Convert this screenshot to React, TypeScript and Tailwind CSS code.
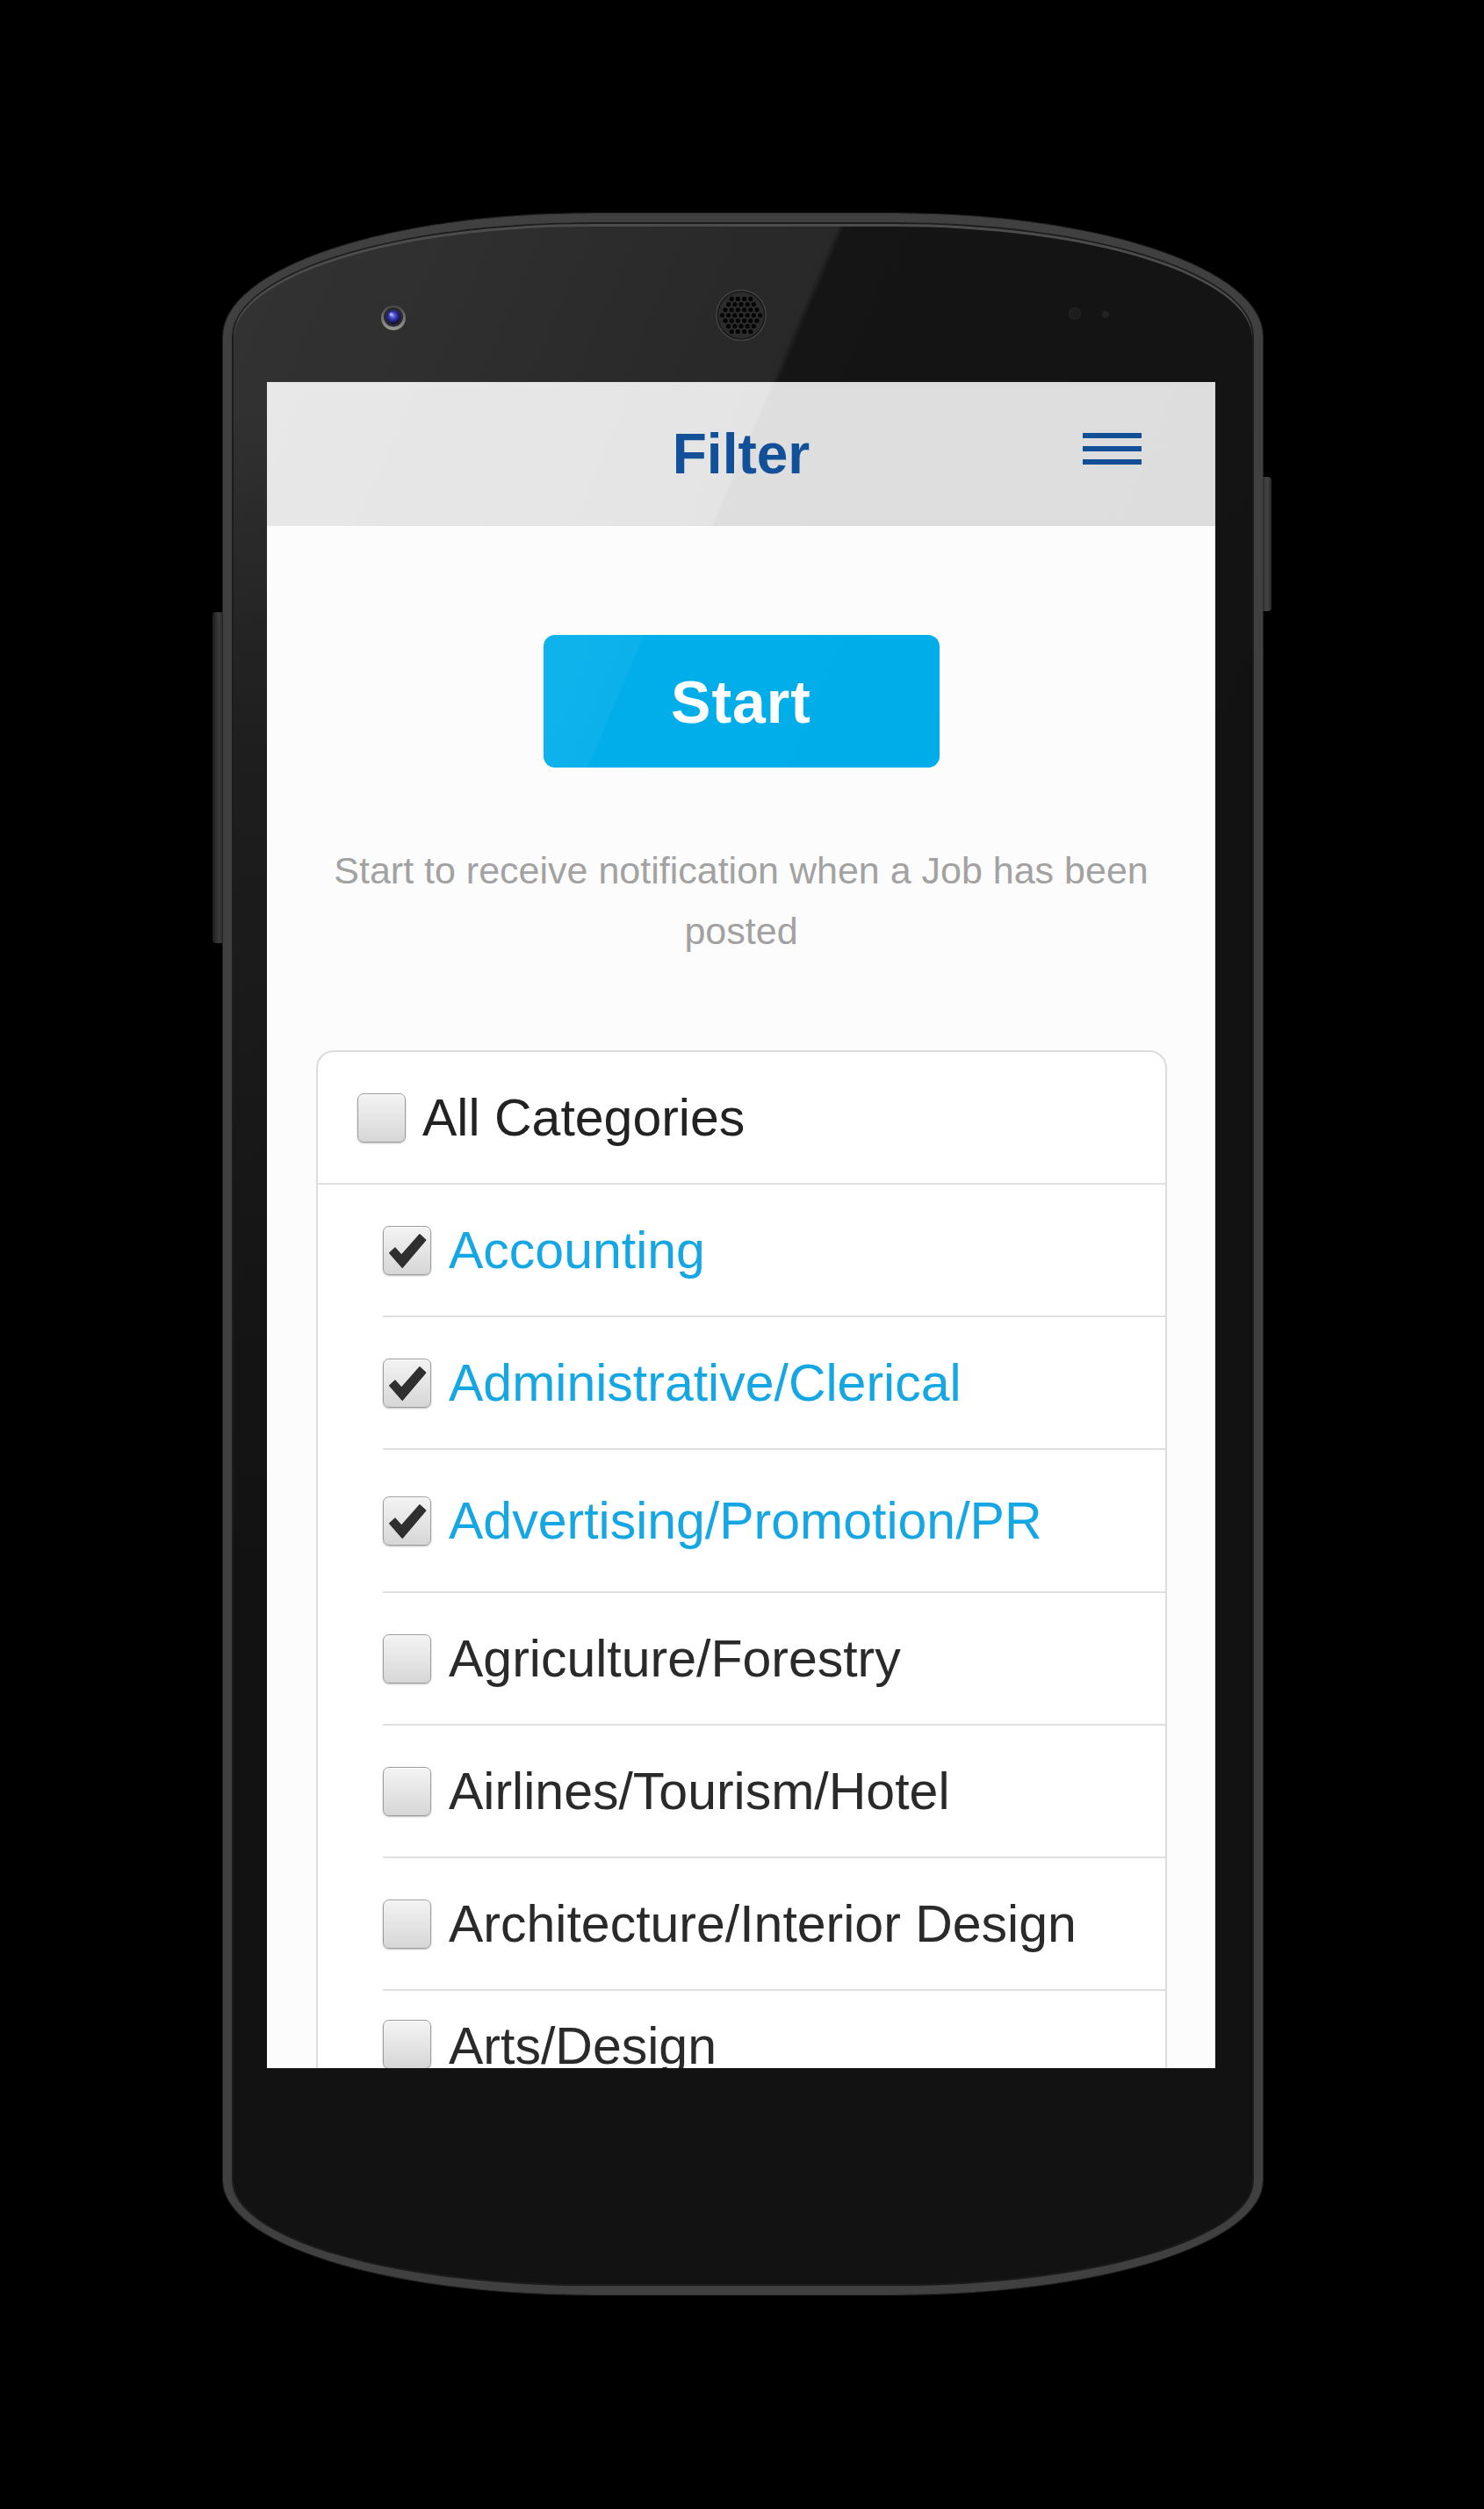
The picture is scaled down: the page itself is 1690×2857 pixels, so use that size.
import React from "react";

const FONT = "font-['Liberation_Sans',Arial,Helvetica,sans-serif]";

function Check({ checked }: { checked: boolean }) {
  return (
    <div className="w-[55px] h-[56px] shrink-0 rounded-[7px] border border-[#9c9c9c] bg-[linear-gradient(180deg,#f3f3f3_0%,#e4e4e4_55%,#d6d6d6_100%)] shadow-[0_1px_2px_rgba(0,0,0,0.25),inset_0_1px_0_#fff] flex items-center justify-center">
      {checked && (
        <svg width="55" height="56" viewBox="0 0 55 56">
          <path
            d="M7 31 L13.5 25 L21 33.5 L42.5 9 L49.5 15.5 L22 48 Z"
            fill="#2f2f2f"
            stroke="#2f2f2f"
            strokeWidth="1.5"
            strokeLinejoin="round"
          />
        </svg>
      )}
    </div>
  );
}

function Speaker() {
  const dots: { x: number; y: number }[] = [];
  for (let r = -4; r <= 4; r++) {
    const y = 29 + r * 6.2;
    const off = r % 2 === 0 ? 0 : 3.6;
    for (let c = -5; c <= 5; c++) {
      const x = 28.5 + c * 7.2 + off;
      const dx = x - 28.5;
      const dy = y - 29;
      if (dx * dx + dy * dy <= 23 * 23) dots.push({ x, y });
    }
  }
  return (
    <svg width="58" height="58" viewBox="0 0 57 58">
      <ellipse cx="28.5" cy="29" rx="28" ry="28.5" fill="#141414" stroke="#444" strokeWidth="1.5" />
      <ellipse cx="28.5" cy="29" rx="26" ry="26.5" fill="#2c2c2c" />
      {dots.map((d, i) => (
        <circle key={i} cx={d.x} cy={d.y} r="2.6" fill="#050505" />
      ))}
    </svg>
  );
}

function Camera() {
  return (
    <svg width="30" height="30" viewBox="0 0 30 30">
      <defs>
        <radialGradient id="lens" cx="45%" cy="40%" r="60%">
          <stop offset="0%" stopColor="#8a8cff" />
          <stop offset="45%" stopColor="#3537b0" />
          <stop offset="100%" stopColor="#0c0c30" />
        </radialGradient>
        <linearGradient id="ring" x1="0" y1="0" x2="0" y2="1">
          <stop offset="0%" stopColor="#4a4a4a" />
          <stop offset="100%" stopColor="#9a9a9a" />
        </linearGradient>
      </defs>
      <circle cx="15" cy="15" r="14" fill="url(#ring)" />
      <circle cx="15" cy="14" r="11" fill="#2a2a2a" />
      <circle cx="15" cy="14" r="8" fill="url(#lens)" />
      <circle cx="12.5" cy="11" r="2" fill="#c8c8ff" opacity="0.7" />
    </svg>
  );
}

const items = [
  { label: "Accounting", checked: true, row: "h-[151px] items-center" },
  { label: "Administrative/Clerical", checked: true, row: "h-[151px] items-center" },
  { label: "Advertising/Promotion/PR", checked: true, row: "h-[163px] items-center" },
  { label: "Agriculture/Forestry", checked: false, row: "h-[151px] items-center" },
  { label: "Airlines/Tourism/Hotel", checked: false, row: "h-[151px] items-center" },
  { label: "Architecture/Interior Design", checked: false, row: "h-[151px] items-center" },
  { label: "Arts/Design", checked: false, row: "h-[151px] items-start pt-[33px]" },
];

export default function App() {
  return (
    <div className={`w-[1690px] h-[2857px] bg-black ${FONT}`}>
      <div className="flex justify-center pt-[243px]">
        <div className="flex items-start">
          {/* left side button */}
          <div className="w-[12px] h-[377px] mt-[454px] rounded-l-[4px] bg-[linear-gradient(90deg,#1e1e1e_0%,#3c3c3c_60%,#2a2a2a_100%)]" />

          {/* phone body */}
          <div className="w-[1184px] h-[2370px] rounded-t-[420px_140px] rounded-b-[420px_130px] border-[10px] border-[#404040] shadow-[inset_0_0_0_2px_#1c1c1c,inset_0_3px_0_2px_#4c4c4c,0_0_0_1px_#222] bg-[linear-gradient(180deg,rgba(17,17,17,0)_0%,rgba(17,17,17,0)_9%,rgba(17,17,17,0.55)_25%,#121212_65%),linear-gradient(113deg,#333333_0%,#282828_32%,#151515_32.4%,#111111_100%)] flex flex-col">
            {/* top bezel */}
            <div className="h-[182px] shrink-0 flex items-start">
              <div className="ml-[169px] mt-[94px]">
                <Camera />
              </div>
              <div className="ml-[352px] mt-[77px]">
                <Speaker />
              </div>
              <div className="ml-[344px] mt-[97px] w-[14px] h-[14px] rounded-full bg-[#1d1d1d] shadow-[inset_0_0_3px_#2c2c2c]" />
              <div className="ml-[24px] mt-[101px] w-[8px] h-[8px] rounded-full bg-[#222]" />
            </div>

            {/* screen */}
            <div className="ml-[40px] w-[1080px] h-[1920px] shrink-0 overflow-hidden bg-[#fcfcfc] flex flex-col">
              {/* header */}
              <div className="h-[164px] shrink-0 grid grid-cols-[1fr_auto_1fr] items-center bg-[linear-gradient(113deg,#e8e8e8_0%,#e4e4e4_50%,#dedede_50.4%,#dddddd_100%)]">
                <div />
                <div className="text-[64px] leading-none font-bold text-[#12509a]">Filter</div>
                <div className="justify-self-end pr-[84px] mb-[12px] flex flex-col gap-[9px]">
                  <div className="w-[67px] h-[6px] bg-[#114f97]" />
                  <div className="w-[67px] h-[6px] bg-[#114f97]" />
                  <div className="w-[67px] h-[6px] bg-[#114f97]" />
                </div>
              </div>

              {/* body */}
              <div className="flex flex-col items-center pt-[124px]">
                <button className="w-[451px] h-[151px] rounded-[13px] bg-[linear-gradient(113deg,#0fb3ec_0%,#0cb1eb_22%,#02aeea_22.4%,#01ade9_100%)] text-white text-[68px] font-bold tracking-[1px] flex items-center justify-center">
                  Start
                </button>
                <p className="mt-[83px] px-[60px] text-center text-[43px] leading-[69px] text-[#a2a2a2]">
                  Start to receive notification when a Job has been posted
                </p>
              </div>

              {/* categories card */}
              <div className="mt-[101px] ml-[56px] mr-[55px] rounded-[20px] border-2 border-[#dcdcdc] bg-white">
                <div className="h-[151px] border-b-2 border-[#e0e0e0] flex items-center pl-[45px]">
                  <Check checked={false} />
                  <span className="ml-[19px] text-[59px] leading-[60px] text-[#222]">All Categories</span>
                </div>
                <div className="ml-[74px]">
                  {items.map((it) => (
                    <div key={it.label} className={`flex border-b-2 border-[#e0e0e0] ${it.row}`}>
                      <Check checked={it.checked} />
                      <span
                        className={`ml-[20px] text-[59px] leading-[60px] ${
                          it.checked ? "text-[#15a7e4]" : "text-[#2a2a2a]"
                        }`}
                      >
                        {it.label}
                      </span>
                    </div>
                  ))}
                </div>
              </div>
            </div>
          </div>

          {/* right side button */}
          <div className="w-[10px] h-[153px] mt-[300px] rounded-r-[4px] bg-[linear-gradient(90deg,#2c2c2c_0%,#454545_50%,#262626_100%)]" />
        </div>
      </div>
    </div>
  );
}
